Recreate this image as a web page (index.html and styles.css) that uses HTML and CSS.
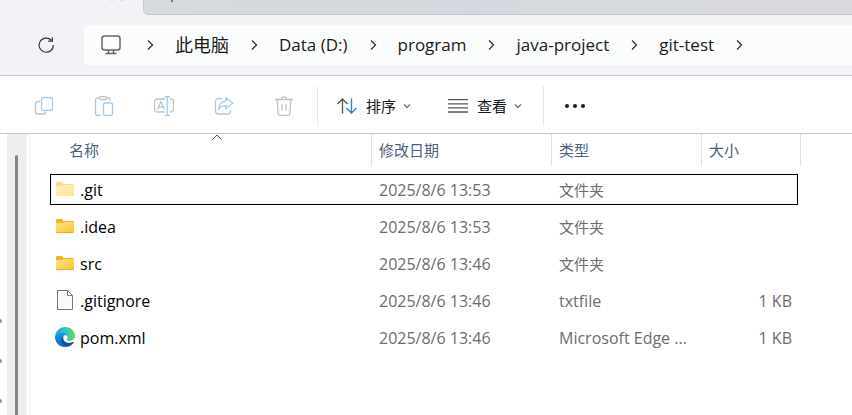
FILE: index.html
```html
<!DOCTYPE html>
<html lang="zh-CN">
<head>
<meta charset="UTF-8">
<meta name="viewport" content="width=device-width, initial-scale=1">
<title>git-test</title>
<link rel="stylesheet" href="styles.css">
</head>
<body>
<div class="tabs">
  <i class="speck"></i><i class="speck"></i>
  <div class="tab"><i class="mark"></i></div>
</div>

<header class="nav">
  <button class="refresh" aria-label="刷新">
    <svg width="18" height="18" viewBox="0 0 18 18"><path d="M16.3 9A7.1 7.1 0 1 1 14.3 4.2M15.4 1.5V5.2H11.2"/></svg>
  </button>
  <nav class="address" aria-label="地址">
    <svg class="monitor" width="20" height="20" viewBox="0 0 20 20"><rect x="1" y="1" width="18" height="14" rx="2.5"/><path d="M7.5 15V18M12.5 15V18M4.5 18.5H15.5"/></svg>
    <svg class="chev" width="8" height="12" viewBox="0 0 8 12"><path d="M2 1.5L6.5 6L2 10.5"/></svg>
    <a class="cjk" href="#">此电脑</a>
    <svg class="chev" width="8" height="12" viewBox="0 0 8 12"><path d="M2 1.5L6.5 6L2 10.5"/></svg>
    <a href="#">Data (D:)</a>
    <svg class="chev" width="8" height="12" viewBox="0 0 8 12"><path d="M2 1.5L6.5 6L2 10.5"/></svg>
    <a href="#">program</a>
    <svg class="chev" width="8" height="12" viewBox="0 0 8 12"><path d="M2 1.5L6.5 6L2 10.5"/></svg>
    <a href="#">java-project</a>
    <svg class="chev" width="8" height="12" viewBox="0 0 8 12"><path d="M2 1.5L6.5 6L2 10.5"/></svg>
    <a href="#">git-test</a>
    <svg class="chev" width="8" height="12" viewBox="0 0 8 12"><path d="M2 1.5L6.5 6L2 10.5"/></svg>
  </nav>
</header>

<div class="toolbar">
  <div class="edit">
    <button aria-label="复制">
      <svg width="20" height="20" viewBox="0 0 20 20"><path class="g" d="M6 5.5H4A2.5 2.5 0 0 0 1.5 8V15.5A2.5 2.5 0 0 0 4 18H9.5A2.5 2.5 0 0 0 12 16"/><rect class="b" x="7.5" y="1.5" width="11" height="13" rx="2.5"/></svg>
    </button>
    <button aria-label="粘贴">
      <svg width="20" height="20" viewBox="0 0 20 20"><path class="g" d="M6 2H3.5A2 2 0 0 0 1.5 4V17.5A2 2 0 0 0 3.5 19.5H7M12 2H14.5A1.5 1.5 0 0 1 16 3.5V5"/><rect class="g" x="5.5" y="0.5" width="7" height="3" rx="1.5"/><rect class="b" x="9.5" y="7" width="9" height="12.5" rx="2"/></svg>
    </button>
    <button aria-label="重命名">
      <svg width="20" height="20" viewBox="0 0 20 20"><path class="g" d="M11 16H3.5A3 3 0 0 1 .5 13V6A3 3 0 0 1 3.5 3H11M16 3H17A2.5 2.5 0 0 1 19.5 5.5V13A3 3 0 0 1 16.5 16H16"/><path class="b" d="M3.5 13.5L7 5.5L10.5 13.5M4.7 11H9.3M10.5 .7H16M10.5 19.3H16M13.2 .7V19.3"/></svg>
    </button>
    <button aria-label="共享">
      <svg width="20" height="20" viewBox="0 0 20 20"><path class="g" d="M8 2.5H4.5A3 3 0 0 0 1.5 5.5V15A3 3 0 0 0 4.5 18H13.5A3 3 0 0 0 16.5 15V14"/><path class="b" d="M12 1.8L18.8 7.2L12 12.7V9.6C8.5 9.4 6.5 10.5 4.5 13C5 8.5 7.5 5.3 12 5Z"/></svg>
    </button>
    <button aria-label="删除">
      <svg width="20" height="20" viewBox="0 0 20 20"><path class="g" d="M1 3.5H19M7.5 3.3A2.5 2.5 0 0 1 12.5 3.3M3 3.5L4.3 17.5A2 2 0 0 0 6.3 19.3H13.7A2 2 0 0 0 15.7 17.5L17 3.5M8 8V14.5M12 8V14.5"/></svg>
    </button>
  </div>
  <div class="view">
    <button>
      <svg class="ico" width="20" height="16" viewBox="0 0 20 16"><path class="dark" d="M5.5 15.5V1M.5 6L5.5 1L10.5 6"/><path class="blue" d="M14.5 .5V15M9.5 10L14.5 15L19.5 10"/></svg>
      排序
      <svg class="down" width="8" height="6" viewBox="0 0 8 6"><path d="M1 1.5L4 4.5L7 1.5"/></svg>
    </button>
    <button>
      <svg class="ico" width="20" height="14" viewBox="0 0 20 14"><path class="dark" d="M0 .7H20M0 4.8H20M0 8.9H20M0 13H20"/></svg>
      查看
      <svg class="down" width="8" height="6" viewBox="0 0 8 6"><path d="M1 1.5L4 4.5L7 1.5"/></svg>
    </button>
  </div>
  <button class="more" aria-label="更多">
    <svg width="20" height="4" viewBox="0 0 20 4"><circle cx="2" cy="2" r="2"/><circle cx="10" cy="2" r="2"/><circle cx="18" cy="2" r="2"/></svg>
  </button>
</div>

<div class="main">
  <aside class="tree"><i></i><i></i><i></i></aside>
  <div class="scroll"><div class="thumb"></div></div>
  <main class="list">
    <table>
      <colgroup><col class="c-name"><col class="c-date"><col class="c-type"><col class="c-size"></colgroup>
      <thead>
        <tr>
          <th class="first"><button>名称<svg class="sort" width="10" height="6" viewBox="0 0 10 6"><path d="M.5 5.5L5 1L9.5 5.5"/></svg></button></th>
          <th><button>修改日期</button></th>
          <th><button>类型</button></th>
          <th><button>大小</button></th>
        </tr>
      </thead>
      <tbody>
        <tr class="focus">
          <td><div class="file"><svg class="faded" width="20" height="20" viewBox="0 0 20 20"><path fill="#f5b21c" d="M1 4Q1 3 2 3H7L8.5 5H18Q19 5 19 6V15H1Z"/><path fill="url(#fold)" d="M1 7H7L8.500 6H19V16Q19 17 18 17H2Q1 17 1 16Z"/></svg>.git</div></td>
          <td>2025/8/6 13:53</td>
          <td class="cjk">文件夹</td>
          <td></td>
        </tr>
        <tr>
          <td><div class="file"><svg width="20" height="20" viewBox="0 0 20 20"><defs><linearGradient id="fold" x2="1" y2="1"><stop offset="0" stop-color="#ffe08a"/><stop offset="1" stop-color="#ffc52e"/></linearGradient></defs><path fill="#f5b21c" d="M1 4Q1 3 2 3H7L8.5 5H18Q19 5 19 6V15H1Z"/><path fill="url(#fold)" d="M1 7H7L8.500 6H19V16Q19 17 18 17H2Q1 17 1 16Z"/><path fill="#e8ac20" d="M1.5 16H18.5V17H1.5Z"/></svg>.idea</div></td>
          <td>2025/8/6 13:53</td>
          <td class="cjk">文件夹</td>
          <td></td>
        </tr>
        <tr>
          <td><div class="file"><svg width="20" height="20" viewBox="0 0 20 20"><path fill="#f5b21c" d="M1 4Q1 3 2 3H7L8.5 5H18Q19 5 19 6V15H1Z"/><path fill="url(#fold)" d="M1 7H7L8.500 6H19V16Q19 17 18 17H2Q1 17 1 16Z"/><path fill="#e8ac20" d="M1.5 16H18.5V17H1.5Z"/></svg>src</div></td>
          <td>2025/8/6 13:46</td>
          <td class="cjk">文件夹</td>
          <td></td>
        </tr>
        <tr>
          <td><div class="file"><svg width="20" height="20" viewBox="0 0 20 20"><path fill="#fafafa" stroke="#777" d="M2.5 .5H12.5L17.5 5.5V19.5H2.5ZM12.5 .5V5.5H17.5"/></svg>.gitignore</div></td>
          <td>2025/8/6 13:46</td>
          <td>txtfile</td>
          <td class="size">1 KB</td>
        </tr>
        <tr>
          <td><div class="file"><svg width="20" height="20" viewBox="0 0 20 20">
            <defs>
              <linearGradient id="sea" x2="1"><stop offset="0" stop-color="#22a4e0"/><stop offset=".5" stop-color="#2fc1cc"/><stop offset="1" stop-color="#67db4b"/></linearGradient>
              <linearGradient id="deep" x2="0" y2="1"><stop offset="0" stop-color="#1b9de2"/><stop offset="1" stop-color="#0a63c2"/></linearGradient>
            </defs>
            <path fill="url(#sea)" d="M0 9.5C.5 4 5 0 10.2 0C16 0 20 4.3 20 8.7C20 12 17.5 13.8 14.8 13.8C12.5 13.8 11.5 13 11.7 12.2C12 11.7 12.5 11.2 12.5 10C12.5 7.6 10.2 5.8 7.2 5.8C3.5 5.8 1 7.5 0 9.5Z"/>
            <path fill="url(#deep)" d="M0 10C.3 7.3 3.5 5.5 7 5.5C10.4 5.5 12.5 7.6 12.5 9.3C12 8.7 10.5 8 9.3 8.5C6.5 9.8 5.5 13 7.5 16C9 18.3 11.5 19.2 13.5 19.3C12.5 19.8 11.2 20 10 20C4.3 20 0 15.5 0 10Z"/>
            <path fill="#114f9e" d="M9 8.7C7.9 10 7.9 12 9.2 13.8C11 16.3 15 16.5 18.3 14.8C18.9 14.6 19 15 18.7 15.4C17.3 17.5 15.5 18.8 13.5 19.4C10.5 19.6 7.5 17.7 6.4 15C5.3 12.3 6.5 9.7 9 8.7Z"/>
          </svg>pom.xml</div></td>
          <td>2025/8/6 13:46</td>
          <td>Microsoft Edge ...</td>
          <td class="size">1 KB</td>
        </tr>
      </tbody>
    </table>
  </main>
</div>
</body>
</html>
```
FILE: styles.css
```css
* { box-sizing: border-box; }
body { margin: 0; min-height: 100vh; display: flex; flex-direction: column; background: #fff; color: #1a1a1a; font: 16px/20px "Open Sans", "Noto Sans CJK SC", sans-serif; }
svg { flex: none; fill: none; }
button { border: 0; padding: 0; background: none; font: inherit; color: inherit; }
a { color: inherit; text-decoration: none; }

.tabs { display: flex; height: 15px; gap: 8px; padding-left: 111px; background: #f2f3f6; }
.tab { flex: 1; margin-left: 12px; padding-left: 27px; background: linear-gradient(90deg, #d5dadd, #d5d9de 40%, #d4d7e1 46%, #d6dade 54%, #d8d9dc); border-left: 1px solid #c8cdd2; border-bottom: 1px solid #c3c7cc; border-bottom-left-radius: 5px; }
.mark { display: block; width: 2px; height: 2px; background: #777; }
.speck { width: 2px; height: 1px; background: #d5d5d8; }

.nav { display: flex; align-items: center; gap: 28px; height: 61px; padding-left: 37px; background: #f2f3f6; border-bottom: 1px solid #c5c5cb; }
.refresh { display: flex; width: 19px; }
.refresh svg { stroke: #333; stroke-width: 1.2; }
.address { flex: 1; display: flex; align-items: center; gap: 21px; height: 40px; padding-left: 17px; background: #fbfdfc; border-radius: 5px 0 0 5px; font-size: 17px; white-space: nowrap; }
.address .cjk { font-size: 18px; }
.monitor { margin-right: 4px; stroke: #666; stroke-width: 1.5; }
.chev { stroke: #333; stroke-width: 1.3; }

.toolbar { display: flex; align-items: center; height: 58px; padding: 3px 0 0 34px; border-bottom: 1px solid #c8c8c8; }
.toolbar svg { stroke-width: 1.3; }
.edit { display: flex; align-items: center; gap: 40px; height: 40px; padding-right: 23px; border-right: 1px solid #e8e8e8; }
.edit button { display: flex; }
.g { stroke: #c2c2c2; }
.b { stroke: #9fcdf0; }
.view { display: flex; align-items: center; gap: 37px; height: 40px; padding: 0 21px 0 19px; border-right: 1px solid #e8e8e8; font-size: 15px; }
.view button { display: flex; align-items: center; gap: 7px; }
.ico { margin-right: 2px; }
.dark { stroke: #555; }
.blue { stroke: #1a80d0; }
.down { stroke: #777; }
.more { display: flex; padding-left: 21px; }
.more svg { fill: #1a1a1a; }

.main { flex: 1; display: flex; }
.tree { width: 7px; display: flex; flex-direction: column; gap: 36px; padding-top: 185px; }
.tree i { width: 2px; height: 4px; border-radius: 0 2px 2px 0; background: #8d949b; }
.scroll { width: 20px; padding: 21px 9px 0 8px; display: flex; background: #eee; }
.thumb { flex: 1; border-radius: 2px 2px 0 0; background: #858585; }
.list { flex: 1; margin-left: 2px; padding-left: 17px; border-left: 1px solid #f2f2f2; }

table { table-layout: fixed; width: 754px; border-spacing: 0; }
.c-name { width: 325px; }
.c-date { width: 180px; }
.c-type { width: 150px; }
th { padding: 0 0 5px; font-weight: normal; }
th.first { padding-left: 15px; }
th button { display: block; position: relative; width: 100%; height: 32px; padding: 0 7px; border-right: 1px solid #e2e2e2; font-size: 15px; color: #4c607a; text-align: left; }
.sort { position: absolute; top: 0; left: 50%; margin-left: -5px; stroke: #555; }
td { height: 37px; padding: 0 7px; color: #6d6d6d; white-space: nowrap; }
td.cjk { font-size: 15px; }
.size { padding-right: 9px; text-align: right; }
.file { display: flex; align-items: center; gap: 5px; padding-left: 1px; color: #000; }
.file svg { margin-bottom: 2px; }
.faded { opacity: .5; }
.focus { outline: 1px solid #000; outline-offset: -4px; border-radius: 2px; }
```
